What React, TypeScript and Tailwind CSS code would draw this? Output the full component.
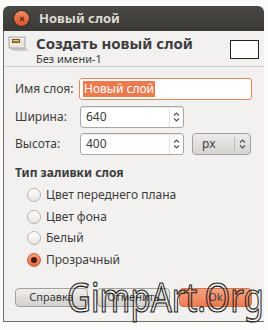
import React from "react";

const font = { fontFamily: '"Noto Sans", "DejaVu Sans", sans-serif' };

function Arrows() {
  return (
    <svg width="7" height="12" viewBox="0 0 7 12">
      <path d="M1 4.5 L3.5 2 L6 4.5" fill="none" stroke="#555" strokeWidth="1.2" />
      <path d="M1 7.5 L3.5 10 L6 7.5" fill="none" stroke="#555" strokeWidth="1.2" />
    </svg>
  );
}

function Spin({ value }: { value: string }) {
  return (
    <div className="flex h-[22px] w-[104px] items-center rounded-[3px] border border-[#a9a8a6] bg-white shadow-[inset_0_1px_1px_rgba(0,0,0,0.1)]">
      <span className="flex-1 pl-[5px] text-[12px] text-[#3c3c3c]">{value}</span>
      <div className="flex h-full w-[14px] items-center justify-center border-l border-[#e2e1df]">
        <Arrows />
      </div>
    </div>
  );
}

function Radio({ checked, label }: { checked?: boolean; label: string }) {
  return (
    <div className="flex h-[21.7px] items-center">
      <div
        className={
          checked
            ? "flex h-[14px] w-[14px] items-center justify-center rounded-full border border-[#c4623e] bg-gradient-to-b from-[#f7a283] to-[#e5663b]"
            : "h-[14px] w-[14px] rounded-full border border-[#b5b3b0] bg-gradient-to-b from-white to-[#e6e5e3]"
        }
      >
        {checked && <div className="h-[6px] w-[6px] rounded-full bg-[#4a1d0d]" />}
      </div>
      <span className="ml-[5px] text-[12px] text-[#3c3c3c]">{label}</span>
    </div>
  );
}

export default function App() {
  return (
    <div className="relative h-[330px] w-[268px] overflow-hidden bg-[#fbfbfa] pl-[3px] pt-[6px]" style={font}>
      <div className="flex w-[261px] flex-col">
        {/* title bar */}
        <div className="flex h-[25px] items-center rounded-t-[6px] bg-gradient-to-b from-[#4a4945] to-[#3a3935] pl-[11px]">
          <div className="flex h-[15px] w-[15px] items-center justify-center rounded-full bg-gradient-to-b from-[#f28a5e] to-[#d9522a] shadow-[0_0_0_1px_#2a2926]">
            <svg width="6" height="6" viewBox="0 0 6 6">
              <path d="M1 1 L5 5 M5 1 L1 5" stroke="#6b2a14" strokeWidth="1.3" />
            </svg>
          </div>
          <span className="ml-[10px] text-[13px] font-bold text-[#dfdbd2]">Новый слой</span>
        </div>
        {/* body */}
        <div className="flex h-[291px] flex-col border-b border-l border-[#6e6d6a] bg-[#f2f1f0]">
          {/* header */}
          <div className="flex h-[36px] items-start border-b border-[#d2d0cc] pl-[3px] pt-[3px]">
            <svg width="24" height="18" viewBox="0 0 24 18" className="mt-[1px]">
              <path d="M2 12 L6 16 L22 16 L18 12 Z" fill="#cfcdc8" />
              <rect x="2" y="2" width="16" height="11" fill="#e9e8e4" stroke="#9c9a95" strokeWidth="0.8" />
              <rect x="5" y="4" width="8" height="4" fill="#7a5a1e" />
              <rect x="6" y="5" width="6" height="1.5" fill="#e2c56a" />
            </svg>
            <div className="ml-[5px] flex flex-col">
              <span className="text-[15px] font-bold leading-[18px] text-[#3c3c3c]">Создать новый слой</span>
              <span className="text-[11px] leading-[13px] text-[#3c3c3c]">Без имени-1</span>
            </div>
            <div className="ml-auto mr-[5px] mt-[6px] h-[19px] w-[29px] border border-[#222] bg-white" />
          </div>
          {/* form */}
          <div className="flex flex-col pl-[11px] pt-[11px]">
            <div className="flex h-[22px] items-center">
              <span className="w-[64px] text-[12px] text-[#3c3c3c]">Имя слоя:</span>
              <div className="flex h-[22px] w-[173px] items-center rounded-[3px] border border-[#e0875f] bg-white pl-[3px]">
                <span className="bg-[#ec7a4f] px-[1px] text-[12px] leading-[16px] text-white">Новый слой</span>
              </div>
            </div>
            <div className="mt-[6px] flex h-[22px] items-center">
              <span className="w-[65px] text-[12px] text-[#3c3c3c]">Ширина:</span>
              <Spin value="640" />
            </div>
            <div className="mt-[5px] flex h-[22px] items-center">
              <span className="w-[65px] text-[12px] text-[#3c3c3c]">Высота:</span>
              <Spin value="400" />
              <div className="ml-[8px] flex h-[22px] w-[59px] items-center rounded-[4px] border border-[#a3a19d] bg-gradient-to-b from-[#ecebe9] to-[#d6d4d1]">
                <span className="flex-1 pl-[9px] text-[12px] text-[#3c3c3c]">px</span>
                <div className="flex h-[14px] w-[16px] items-center justify-center border-l border-[#bdbbb7]">
                  <Arrows />
                </div>
              </div>
            </div>
            <span className="mt-[10px] text-[12px] font-bold leading-[16px] text-[#3c3c3c]">Тип заливки слоя</span>
            <div className="mt-[3px] flex flex-col pl-[12px]">
              <Radio label="Цвет переднего плана" />
              <Radio label="Цвет фона" />
              <Radio label="Белый" />
              <Radio checked label="Прозрачный" />
            </div>
          </div>
          {/* buttons */}
          <div className="mt-auto mb-[14px] flex gap-[9px] pl-[11px]">
            <div className="flex h-[19px] w-[73px] items-center justify-center rounded-[4px] border border-[#a3a19d] bg-gradient-to-b from-[#efeeec] to-[#d3d1cd] text-[11px] text-[#3c3c3c]">
              Справка
            </div>
            <div className="flex h-[19px] w-[73px] items-center justify-center rounded-[4px] border border-[#a3a19d] bg-gradient-to-b from-[#efeeec] to-[#d3d1cd] text-[11px] text-[#3c3c3c]">
              Отменить
            </div>
            <div className="flex h-[19px] w-[73px] items-center justify-center rounded-[4px] border border-[#d4734c] bg-gradient-to-b from-[#f6a283] to-[#ec7b50] text-[11px] text-[#3c3c3c]">
              Ok
            </div>
          </div>
        </div>
      </div>
      {/* watermark */}
      <div
        className="pointer-events-none absolute left-[67px] top-[274px] origin-top scale-y-[1.2] text-[33px] leading-[40px] text-transparent [-webkit-text-stroke:1px_#222]"
        style={{ fontFamily: '"Noto Sans", sans-serif' }}
      >
        GimpArt.Org
      </div>
    </div>
  );
}
